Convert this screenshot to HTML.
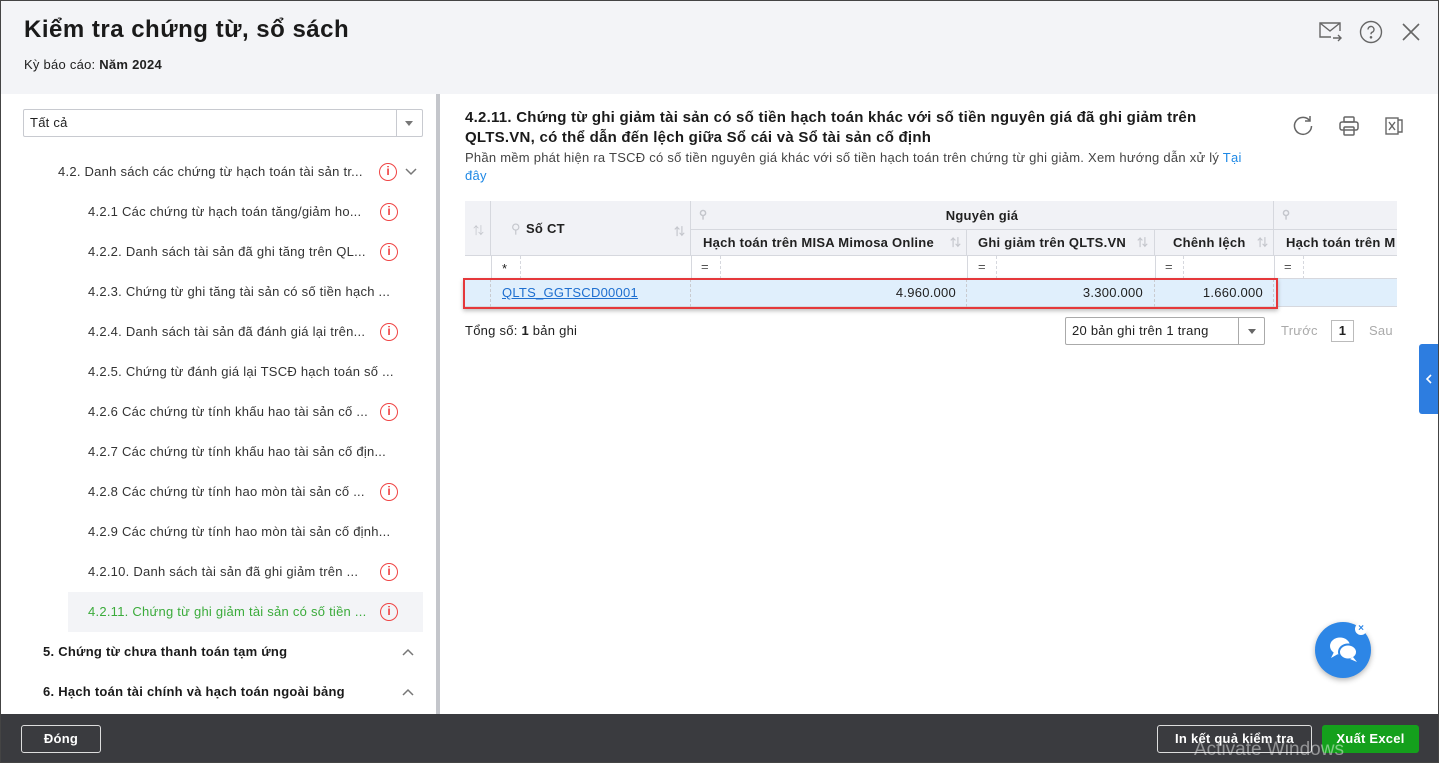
<!DOCTYPE html>
<html><head><meta charset="utf-8"><style>
*{box-sizing:border-box;margin:0;padding:0}
body{width:1439px;height:763px;overflow:hidden;font-family:"Liberation Sans","Noto Sans CJK SC",sans-serif;color:#212121;position:relative;background:#fff;font-size:13px;letter-spacing:.25px}
.abs{position:absolute}
.frame{position:absolute;left:0;top:0;width:1439px;height:763px;border:1px solid #444;pointer-events:none;z-index:50}
.hdr{left:0;top:0;width:1439px;height:94px;background:#f3f4f7}
.item{position:absolute;font-size:13px;color:#333;white-space:nowrap}
.info{position:absolute;width:18px;height:18px;border:1.5px solid #ef4444;border-radius:50%;color:#ef4444;font-size:12px;font-weight:bold;text-align:center;line-height:15px;letter-spacing:0}
.th{position:absolute;background:#f1f2f6;border-right:1px solid #d6d8de;border-bottom:1px solid #d6d8de;font-weight:bold;font-size:13px}
.ar{position:absolute;color:#c4c6cc;font-size:11px}
.cell{position:absolute;font-size:13px;top:279px;height:28px;line-height:28px;border-right:1px dashed #c9cbd0}
</style></head><body>
<div class="abs hdr"></div>
<div class="abs" style="left:24px;top:16px;font-size:24px;font-weight:bold;color:#1a1a1a;letter-spacing:.5px">Kiểm tra chứng từ, sổ sách</div>
<div class="abs" style="left:24px;top:57px;font-size:13px">Kỳ báo cáo: <b>Năm 2024</b></div>
<svg class="abs" style="left:1318px;top:20px" width="26" height="24" viewBox="0 0 26 24" fill="none" stroke="#666" stroke-width="1.4"><path d="M13 17H2V3h20v8"/><path d="M2 3l10 8 10-8"/><path d="M15 18h8M20 15l3 3-3 3"/></svg>
<svg class="abs" style="left:1359px;top:20px" width="24" height="24" viewBox="0 0 24 24" fill="none" stroke="#666" stroke-width="1.4"><circle cx="12" cy="12" r="10.5"/><path d="M9 9.5a3 3 0 1 1 4 2.8c-.8.4-1 1-1 2"/><circle cx="12" cy="17.3" r=".6" fill="#666"/></svg>
<svg class="abs" style="left:1401px;top:22px" width="20" height="20" viewBox="0 0 20 20" stroke="#666" stroke-width="1.6"><path d="M2 2l16 16M18 2L2 18"/></svg>
<div class="abs" style="left:23px;top:109px;width:400px;height:28px;border:1px solid #c8cad0;border-radius:2px"></div>
<div class="abs" style="left:30px;top:115px;font-size:13px">Tất cả</div>
<div class="abs" style="left:396px;top:110px;width:1px;height:26px;background:#c8cad0"></div>
<div class="abs" style="left:405px;top:121px;border-left:4px solid transparent;border-right:4px solid transparent;border-top:5px solid #777"></div>
<div class="abs" style="left:436px;top:94px;width:4px;height:620px;background:#c4c6cb"></div>
<div class="abs" style="left:68px;top:592px;width:355px;height:40px;background:#f3f4f7"></div>
<div class="item" style="left:58px;top:164px">4.2. Danh sách các chứng từ hạch toán tài sản tr...</div>
<div class="info" style="left:379px;top:163px">i</div>
<svg class="abs" style="left:405px;top:168px" width="12" height="8" viewBox="0 0 12 8" fill="none" stroke="#777" stroke-width="1.5"><path d="M1 1l5 5 5-5"/></svg>
<div class="item" style="left:88px;top:204px">4.2.1 Các chứng từ hạch toán tăng/giảm ho...</div><div class="info" style="left:380px;top:203px">i</div>
<div class="item" style="left:88px;top:244px">4.2.2. Danh sách tài sản đã ghi tăng trên QL...</div><div class="info" style="left:380px;top:243px">i</div>
<div class="item" style="left:88px;top:284px">4.2.3. Chứng từ ghi tăng tài sản có số tiền hạch ...</div>
<div class="item" style="left:88px;top:324px">4.2.4. Danh sách tài sản đã đánh giá lại trên...</div><div class="info" style="left:380px;top:323px">i</div>
<div class="item" style="left:88px;top:364px">4.2.5. Chứng từ đánh giá lại TSCĐ hạch toán số ...</div>
<div class="item" style="left:88px;top:404px">4.2.6 Các chứng từ tính khấu hao tài sản cố ...</div><div class="info" style="left:380px;top:403px">i</div>
<div class="item" style="left:88px;top:444px">4.2.7 Các chứng từ tính khấu hao tài sản cố địn...</div>
<div class="item" style="left:88px;top:484px">4.2.8 Các chứng từ tính hao mòn tài sản cố ...</div><div class="info" style="left:380px;top:483px">i</div>
<div class="item" style="left:88px;top:524px">4.2.9 Các chứng từ tính hao mòn tài sản cố định...</div>
<div class="item" style="left:88px;top:564px">4.2.10. Danh sách tài sản đã ghi giảm trên ...</div><div class="info" style="left:380px;top:563px">i</div>
<div class="item" style="left:88px;top:604px;color:#3bab3b">4.2.11. Chứng từ ghi giảm tài sản có số tiền ...</div><div class="info" style="left:380px;top:603px">i</div>
<div class="item" style="left:43px;top:644px;font-weight:bold;color:#1a1a1a">5. Chứng từ chưa thanh toán tạm ứng</div>
<svg class="abs" style="left:402px;top:648px" width="12" height="8" viewBox="0 0 12 8" fill="none" stroke="#777" stroke-width="1.5"><path d="M1 7l5-5 5 5"/></svg>
<div class="item" style="left:43px;top:684px;font-weight:bold;color:#1a1a1a">6. Hạch toán tài chính và hạch toán ngoài bảng</div>
<svg class="abs" style="left:402px;top:688px" width="12" height="8" viewBox="0 0 12 8" fill="none" stroke="#777" stroke-width="1.5"><path d="M1 7l5-5 5 5"/></svg>
<div class="abs" style="left:465px;top:108px;width:740px;font-size:15px;font-weight:bold;line-height:20px;color:#1a1a1a">4.2.11. Chứng từ ghi giảm tài sản có số tiền hạch toán khác với số tiền nguyên giá đã ghi giảm trên QLTS.VN, có thể dẫn đến lệch giữa Sổ cái và Sổ tài sản cố định</div>
<div class="abs" style="left:465px;top:149px;width:780px;font-size:13px;line-height:18px;color:#444">Phần mềm phát hiện ra TSCĐ có số tiền nguyên giá khác với số tiền hạch toán trên chứng từ ghi giảm. Xem hướng dẫn xử lý <span style="color:#1e88e5">Tại đây</span></div>
<svg class="abs" style="left:1292px;top:115px" width="22" height="22" viewBox="0 0 22 22" fill="none" stroke="#666" stroke-width="1.5"><path d="M18 6A8.5 8.5 0 1 0 19.5 11"/><path d="M18 1v5h-5"/></svg>
<svg class="abs" style="left:1338px;top:115px" width="22" height="22" viewBox="0 0 22 22" fill="none" stroke="#666" stroke-width="1.5"><rect x="6" y="2" width="10" height="5" rx="1"/><rect x="2" y="7" width="18" height="8" rx="2"/><rect x="6" y="12" width="10" height="8" rx="1"/></svg>
<svg class="abs" style="left:1384px;top:116px" width="20" height="20" viewBox="0 0 20 20" fill="none" stroke="#666" stroke-width="1.4"><rect x="2" y="2" width="12" height="16"/><path d="M14 4h4v12h-4"/><path d="M5 6l6 8M11 6l-6 8"/></svg>
<div class="th" style="left:465px;top:201px;width:26px;height:55px"></div>
<div class="ar" style="left:473px;top:222px">⇅</div>
<div class="th" style="left:491px;top:201px;width:200px;height:55px"><span class="abs" style="left:20px;top:20px;color:#c4c6cc;font-weight:normal">⚲</span><span class="abs" style="left:35px;top:20px">Số CT</span><span class="ar" style="left:183px;top:22px">⇅</span></div>
<div class="th" style="left:691px;top:201px;width:583px;height:29px;text-align:center;line-height:29px">Nguyên giá<span class="ar" style="left:8px;top:0px">⚲</span></div>
<div class="th" style="left:691px;top:230px;width:276px;height:26px;line-height:26px;padding-left:12px">Hạch toán trên MISA Mimosa Online<span class="ar" style="left:259px;top:0">⇅</span></div>
<div class="th" style="left:967px;top:230px;width:188px;height:26px;line-height:26px;padding-left:11px">Ghi giảm trên QLTS.VN<span class="ar" style="left:170px;top:0">⇅</span></div>
<div class="th" style="left:1155px;top:230px;width:119px;height:26px;line-height:26px;padding-left:18px">Chênh lệch<span class="ar" style="left:102px;top:0">⇅</span></div>
<div class="th" style="left:1274px;top:201px;width:123px;height:29px;border-right:none"><span class="ar" style="left:8px;top:7px">⚲</span></div>
<div class="th" style="left:1274px;top:230px;width:123px;height:26px;line-height:26px;padding-left:12px;border-right:none;white-space:nowrap;overflow:hidden">Hạch toán trên M</div>
<div class="abs" style="left:465px;top:256px;width:932px;height:23px;border-bottom:1px solid #d6d8de"></div>
<div class="abs" style="left:491px;top:256px;width:1px;height:23px;background:#d6d8de"></div>
<div class="abs" style="left:502px;top:261px">*</div>
<div class="abs" style="left:520px;top:256px;width:1px;height:23px;border-left:1px dashed #d6d8de"></div>
<div class="abs" style="left:691px;top:256px;width:1px;height:23px;background:#d6d8de"></div><div class="abs" style="left:701px;top:259px;color:#555">=</div><div class="abs" style="left:720px;top:256px;width:1px;height:23px;border-left:1px dashed #d6d8de"></div>
<div class="abs" style="left:967px;top:256px;width:1px;height:23px;background:#d6d8de"></div><div class="abs" style="left:978px;top:259px;color:#555">=</div><div class="abs" style="left:996px;top:256px;width:1px;height:23px;border-left:1px dashed #d6d8de"></div>
<div class="abs" style="left:1155px;top:256px;width:1px;height:23px;background:#d6d8de"></div><div class="abs" style="left:1165px;top:259px;color:#555">=</div><div class="abs" style="left:1183px;top:256px;width:1px;height:23px;border-left:1px dashed #d6d8de"></div>
<div class="abs" style="left:1274px;top:256px;width:1px;height:23px;background:#d6d8de"></div><div class="abs" style="left:1284px;top:259px;color:#555">=</div><div class="abs" style="left:1303px;top:256px;width:1px;height:23px;border-left:1px dashed #d6d8de"></div>
<div class="abs" style="left:465px;top:279px;width:932px;height:28px;background:#e0effc;border-bottom:1px solid #d6d8de"></div>
<div class="cell" style="left:465px;width:26px"></div>
<div class="cell" style="left:491px;width:200px;padding-left:11px;color:#1e6fd0;text-decoration:underline">QLTS_GGTSCD00001</div>
<div class="cell" style="left:691px;width:276px;text-align:right;padding-right:10px">4.960.000</div>
<div class="cell" style="left:967px;width:188px;text-align:right;padding-right:11px">3.300.000</div>
<div class="cell" style="left:1155px;width:119px;text-align:right;padding-right:10px">1.660.000</div>
<div class="abs" style="left:463px;top:278px;width:815px;height:31px;border:2px solid #e5383b;box-shadow:0 2px 4px rgba(0,0,0,.25)"></div>
<div class="abs" style="left:465px;top:323px">Tổng số: <b>1</b> bản ghi</div>
<div class="abs" style="left:1065px;top:317px;width:200px;height:28px;border:1px solid #aaa;border-radius:2px"></div>
<div class="abs" style="left:1072px;top:323px">20 bản ghi trên 1 trang</div>
<div class="abs" style="left:1238px;top:318px;width:1px;height:26px;background:#aaa"></div>
<div class="abs" style="left:1248px;top:329px;border-left:4px solid transparent;border-right:4px solid transparent;border-top:5px solid #666"></div>
<div class="abs" style="left:1281px;top:323px;color:#aaa">Trước</div>
<div class="abs" style="left:1331px;top:320px;width:23px;height:22px;border:1px solid #bbb;text-align:center;line-height:20px;font-weight:bold">1</div>
<div class="abs" style="left:1369px;top:323px;color:#aaa">Sau</div>
<div class="abs" style="left:1419px;top:344px;width:20px;height:70px;background:#2d7de0;border-radius:3px 0 0 3px"></div>
<svg class="abs" style="left:1425px;top:374px" width="8" height="10" viewBox="0 0 8 10" fill="none" stroke="#fff" stroke-width="1.6"><path d="M6 1L2 5l4 4"/></svg>
<div class="abs" style="left:1315px;top:622px;width:56px;height:56px;border-radius:50%;background:#2d86e6;box-shadow:0 2px 6px rgba(0,0,0,.3)"></div>
<svg class="abs" style="left:1327px;top:635px" width="34" height="30" viewBox="0 0 34 30" fill="#fff"><ellipse cx="13" cy="11" rx="10" ry="8.5"/><path d="M7 17l-3 6 7-4z"/><ellipse cx="21" cy="17" rx="9" ry="7.5" stroke="#2d86e6" stroke-width="2"/><path d="M26 22l4 5-7-3z"/></svg>
<div class="abs" style="left:1355px;top:623px;width:12px;height:12px;border-radius:50%;background:#fff;color:#2d86e6;font-size:10px;line-height:12px;text-align:center;font-weight:bold;letter-spacing:0">×</div>
<div class="abs" style="left:0;top:714px;width:1439px;height:49px;background:#3a3b3f"></div>
<div class="abs" style="left:21px;top:725px;width:80px;height:28px;border:1px solid #ddd;border-radius:3px;color:#fff;font-weight:bold;text-align:center;line-height:26px">Đóng</div>
<div class="abs" style="left:1157px;top:725px;width:155px;height:28px;border:1px solid #ddd;border-radius:3px;color:#fff;font-weight:bold;text-align:center;line-height:26px">In kết quả kiểm tra</div>
<div class="abs" style="left:1322px;top:725px;width:97px;height:28px;background:#14a01c;border-radius:3px;color:#fff;font-weight:bold;text-align:center;line-height:28px">Xuất Excel</div>
<div class="abs" style="left:1194px;top:739px;color:rgba(255,255,255,.45);font-size:19px;letter-spacing:0">Activate Windows</div>
<div class="frame"></div>
</body></html>
